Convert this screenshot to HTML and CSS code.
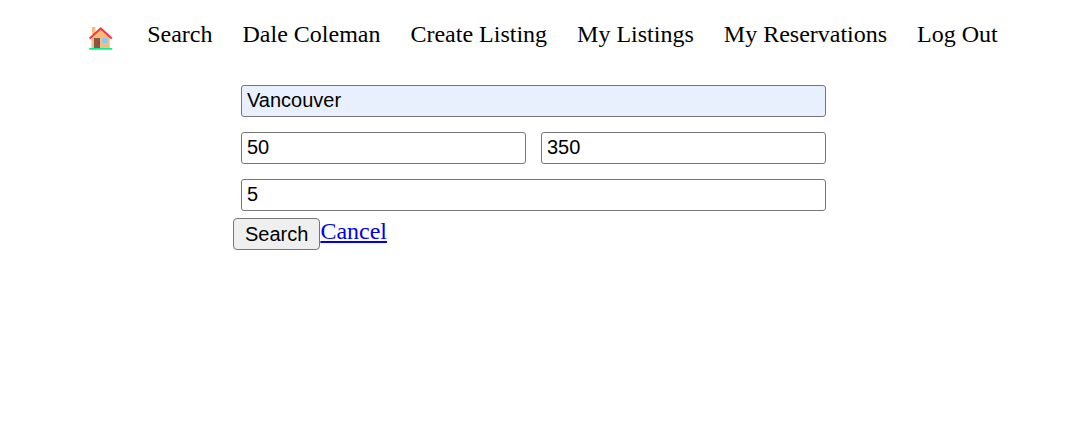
FILE: index.html
```html
<!DOCTYPE html>
<html lang="en">
<head>
<meta charset="utf-8">
<title>Search</title>
<link rel="stylesheet" href="styles.css">
</head>
<body>
<nav class="nav">
  <a class="home" href="#" aria-label="Home">
    <svg class="house" viewBox="0 0 24 24" aria-hidden="true">
      <path fill="#f4bd7c" d="M3 0h3.300v7H3z"/>
      <path fill="#f4bd7c" d="M11.700 1l9 9v11H2.500V10z"/>
      <path fill="#8d5548" d="M5 11h6v10H5z"/>
      <path fill="#4f2f28" d="M9.500 15.500h1v1h-1z"/>
      <path fill="#85c8fb" d="M13.300 11h5v5h-5z"/>
      <path fill="none" stroke="#f9373f" stroke-width="2" d="M.6 11.600L11.700 1.400l11.100 10.200"/>
      <path fill="#00f08c" d="M.2 21h23v1.700H.2z"/>
    </svg>
  </a>
  <a class="link" href="#">Search</a>
  <a class="link" href="#">Dale Coleman</a>
  <a class="link" href="#">Create Listing</a>
  <a class="link" href="#">My Listings</a>
  <a class="link" href="#">My Reservations</a>
  <a class="link" href="#">Log Out</a>
</nav>
<form class="form">
  <div class="fields">
    <input class="field wide filled" type="text" aria-label="City" value="Vancouver">
    <input class="field" type="text" aria-label="Minimum price" value="50">
    <input class="field" type="text" aria-label="Maximum price" value="350">
    <input class="field wide" type="text" aria-label="Minimum rating" value="5">
  </div>
  <div class="actions">
    <button class="submit" type="submit">Search</button><a class="cancel" href="#">Cancel</a>
  </div>
</form>
</body>
</html>
```
FILE: styles.css
```css
* {
  box-sizing: border-box;
}

body {
  margin: 0;
  background: #fff;
  color: #000;
  font: 24px/28px "Liberation Serif", "Times New Roman", serif;
}

.nav {
  display: flex;
  justify-content: center;
  gap: 30px;
  padding: 20px 0 37px 20px;
}

.link {
  color: #000;
  text-decoration: none;
}

.home {
  display: flex;
  align-items: flex-end;
  padding-right: 4px;
}

.house {
  display: block;
  width: 24px;
  height: 24px;
  margin-bottom: -3px;
}

.form {
  max-width: 601px;
  margin: 0 auto;
}

.fields {
  display: grid;
  grid-template-columns: 1fr 1fr;
  gap: 15px;
  padding: 0 8px;
}

.field {
  width: 100%;
  min-width: 0;
  height: 32px;
  padding: 0 5px 2px;
  border: 1px solid #767676;
  border-radius: 3px;
  background: #fff;
  color: #000;
  font: 20px "Liberation Sans", Arial, sans-serif;
}

.wide {
  grid-column: 1 / -1;
}

.filled {
  background: #e8f0fe;
}

.actions {
  display: flex;
  align-items: flex-start;
  padding-top: 7px;
}

.submit {
  height: 32px;
  padding: 0 11px;
  border: 1px solid #767676;
  border-radius: 4px;
  background: #efefef;
  color: #000;
  font: 20px "Liberation Sans", Arial, sans-serif;
}

.cancel {
  color: #00e;
  line-height: 26px;
}
```
